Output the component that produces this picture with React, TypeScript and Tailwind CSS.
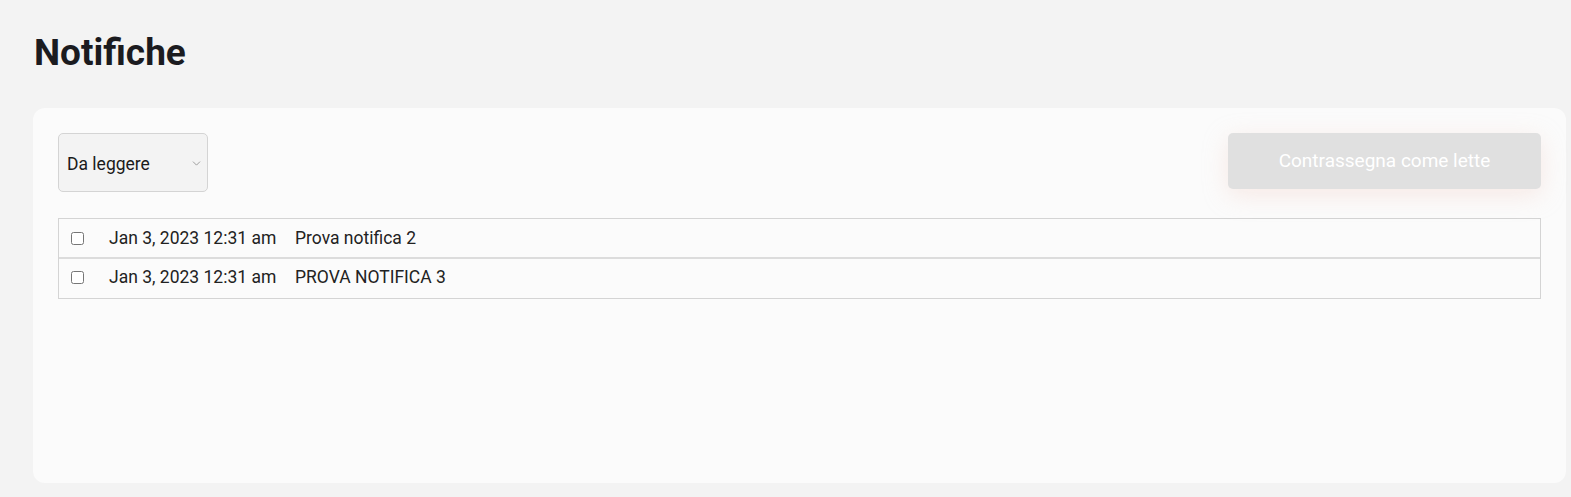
import { ChevronDown } from 'lucide-react'

const rows = [
  { date: 'Jan 3, 2023 12:31 am', text: 'Prova notifica 2' },
  { date: 'Jan 3, 2023 12:31 am', text: 'PROVA NOTIFICA 3' },
]

export default function App() {
  return (
    <div className="min-h-screen bg-[#f3f3f3] px-[33px] pt-[32px] text-[#222]" style={{ fontFamily: 'Roboto, "Liberation Sans", sans-serif' }}>
      <h1 className="text-[37px] leading-[42px] font-bold text-[#1b1b1f] pl-px mb-[34px]">Notifiche</h1>
      <div className="h-[375px] w-[1533px] rounded-[12px] bg-[#fbfbfb] p-[25px]">
        <div className="flex items-start justify-between">
          <div className="relative w-[150px] h-[59px]">
            <select className="appearance-none w-full h-full rounded-[5px] border border-[#d4d4d4] bg-[#f3f3f3] pl-[8px] pt-[3px] text-[17.5px] text-[#1a1a1a] outline-none">
              <option>Da leggere</option>
            </select>
            <ChevronDown className="pointer-events-none absolute right-[5px] top-[24px] text-[#8a8a8a]" size={13} strokeWidth={1.5} />
          </div>
          <button
            disabled
            className="w-[313px] h-[56px] rounded-[5px] bg-[#e0e0e0] text-white text-[19px] shadow-[0_6px_24px_rgba(240,200,190,0.35)]"
          >
            Contrassegna come lette
          </button>
        </div>
        <div className="mt-[26px] border border-[#d4d4d4]">
          {rows.map((r, i) => (
            <div
              key={i}
              className={`flex items-center text-[17.5px] text-[#222] ${i > 0 ? 'border-t-2 border-[#dcdcdc] h-[41px] pb-[2px]' : 'h-[38px]'}`}
            >
              <input type="checkbox" className="ml-[12px] w-[13px] h-[13px] m-0" />
              <span className="ml-[25px] w-[186px]">{r.date}</span>
              <span>{r.text}</span>
            </div>
          ))}
        </div>
      </div>
    </div>
  )
}
